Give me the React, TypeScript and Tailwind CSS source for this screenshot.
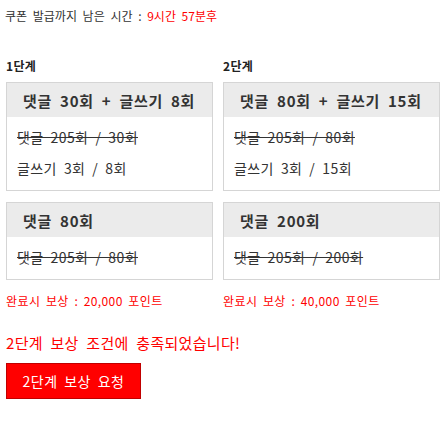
import React from "react";

const font = { fontFamily: '"Noto Sans CJK KR", "Noto Sans", sans-serif' };

function Card({ title, lines, width }: { title: string; lines: { text: string; strike?: boolean }[]; width: string }) {
  return (
    <div className={`${width} border border-[#d5d5d5] bg-white`}>
      <div className="h-[34px] bg-[#ebebeb] pl-[16px] flex items-center text-[15px] font-bold text-[#333] leading-none tracking-[0.7px] [word-spacing:4px]">
        {title}
      </div>
      <div className="pl-[10px] pt-[5px] pb-[6px] text-[14px] text-[#333] tracking-[0.4px] [word-spacing:3.5px]">
        {lines.map((l, i) => (
          <div key={i} className={`leading-[31px] ${l.strike ? "line-through" : ""}`}>
            {l.text}
          </div>
        ))}
      </div>
    </div>
  );
}

export default function App() {
  return (
    <div className="bg-white w-[448px] h-[426px] px-[6px] pt-[9px]" style={font}>
      <div className="text-[12px] leading-[14px] text-[#333] -ml-[1px] [word-spacing:3px]">
        쿠폰 발급까지 남은 시간 : <span className="text-[#ff0000]">9시간 57분후</span>
      </div>
      <div className="flex gap-[10px] mt-[35px]">
        <div className="flex flex-col w-[207px]">
          <div className="text-[12px] font-bold leading-[16px] text-[#222] mb-[8px] tracking-[0.3px]">1단계</div>
          <Card
            width="w-[207px]"
            title="댓글 30회 + 글쓰기 8회"
            lines={[
              { text: "댓글 205회 / 30회", strike: true },
              { text: "글쓰기 3회 / 8회" },
            ]}
          />
          <div className="mt-[11px]">
            <Card width="w-[207px]" title="댓글 80회" lines={[{ text: "댓글 205회 / 80회", strike: true }]} />
          </div>
          <div className="mt-[14px] text-[12px] leading-[14px] text-[#ff0000] tracking-[0.4px] [word-spacing:2.5px]">완료시 보상 : 20,000 포인트</div>
        </div>
        <div className="flex flex-col w-[217px]">
          <div className="text-[12px] font-bold leading-[16px] text-[#222] mb-[8px] tracking-[0.3px]">2단계</div>
          <Card
            width="w-[217px]"
            title="댓글 80회 + 글쓰기 15회"
            lines={[
              { text: "댓글 205회 / 80회", strike: true },
              { text: "글쓰기 3회 / 15회" },
            ]}
          />
          <div className="mt-[11px]">
            <Card width="w-[217px]" title="댓글 200회" lines={[{ text: "댓글 205회 / 200회", strike: true }]} />
          </div>
          <div className="mt-[14px] text-[12px] leading-[14px] text-[#ff0000] tracking-[0.4px] [word-spacing:2.5px]">완료시 보상 : 40,000 포인트</div>
        </div>
      </div>
      <div className="mt-[25px] text-[15px] leading-[20px] text-[#ff0000] tracking-[0.3px] [word-spacing:4px]">2단계 보상 조건에 충족되었습니다!</div>
      <button className="mt-[10px] h-[36px] w-[135px] bg-[#ff0000] border border-[#c00000] text-white text-[14px] flex items-center justify-center tracking-[0.5px] [word-spacing:3px]">
        2단계 보상 요청
      </button>
    </div>
  );
}
